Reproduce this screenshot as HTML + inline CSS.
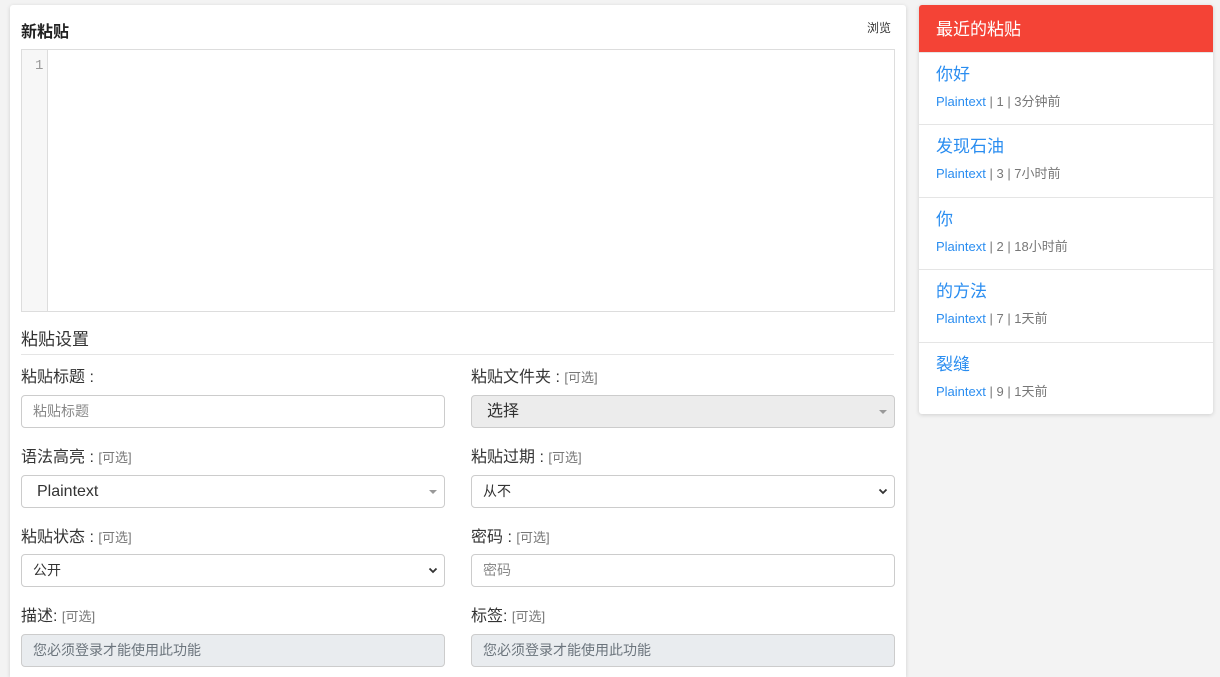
<!DOCTYPE html>
<html><head><meta charset="utf-8"><style>
*{box-sizing:border-box;margin:0;padding:0}
html,body{width:1220px;height:677px;overflow:hidden}
body{background:#f3f3f3;font-family:"Liberation Sans","Noto Sans CJK SC",sans-serif;color:#333;position:relative}
.abs{position:absolute}
.card{position:absolute;background:#fff;border-radius:3px;box-shadow:0 1px 4px rgba(0,0,0,.15)}
.lbl{position:absolute;font-size:16px;color:#333}
.lbl small{font-size:13px;color:#777}
.inp{position:absolute;height:33px;border:1px solid #ccc;border-radius:4px;background:#fff;font-size:14px;padding:0 11px;line-height:31px;color:#555}
.ph{color:#888}
.dis{background:#e9ecef;color:#6c757d}
.car{position:absolute;right:7px;top:14px;width:0;height:0;border-left:4px solid transparent;border-right:4px solid transparent;border-top:4px solid #999}
.chev{position:absolute;right:6px;top:10px}
.item{position:absolute;left:0;width:294px;border-top:1px solid #e5e5e5;padding:12px 17px}
.item .t{font-size:17px;color:#2a8df0;line-height:20px}
.item .m{font-size:13px;color:#777;margin-top:6px}
.item .m b{font-weight:normal;color:#2a8df0}
</style></head><body>
<div class="card" style="left:10px;top:5px;width:896px;height:672px;border-radius:3px 3px 0 0"></div>
<div class="abs" style="left:21px;top:18px;font-size:16px;font-weight:bold;color:#222">新粘贴</div>
<div class="abs" style="left:867px;top:19px;font-size:12px;color:#333">浏览</div>
<div class="abs" style="left:21px;top:49px;width:874px;height:263px;border:1px solid #ddd;background:#fff"></div>
<div class="abs" style="left:22px;top:50px;width:26px;height:261px;background:#f7f7f7;border-right:1px solid #ddd"></div>
<div class="abs" style="left:35px;top:58px;font-family:'Liberation Mono',monospace;font-size:14px;color:#999">1</div>
<div class="abs" style="left:21px;top:325px;font-size:17px;color:#333">粘贴设置</div>
<div class="abs" style="left:21px;top:354px;width:873px;height:1px;background:#e5e5e5"></div>

<div class="lbl" style="left:21px;top:363px">粘贴标题 :</div>
<div class="lbl" style="left:471px;top:363px">粘贴文件夹 : <small>[可选]</small></div>
<div class="inp ph" style="left:21px;top:395px;width:424px">粘贴标题</div>
<div class="inp" style="left:471px;top:395px;width:424px;background:#ececec;color:#333;font-size:16px;padding-left:15px">选择<span class="car"></span></div>

<div class="lbl" style="left:21px;top:443px">语法高亮 : <small>[可选]</small></div>
<div class="lbl" style="left:471px;top:443px">粘贴过期 : <small>[可选]</small></div>
<div class="inp" style="left:21px;top:475px;width:424px;color:#333;font-size:16px;padding-left:15px">Plaintext<span class="car"></span></div>
<div class="inp" style="left:471px;top:475px;width:424px;color:#333">从不<svg class="chev" width="10" height="10" viewBox="0 0 10 10"><path d="M1.5 3.5L5 7l3.5-3.5" stroke="#333" stroke-width="1.8" fill="none"/></svg></div>

<div class="lbl" style="left:21px;top:523px">粘贴状态 : <small>[可选]</small></div>
<div class="lbl" style="left:471px;top:523px">密码 : <small>[可选]</small></div>
<div class="inp" style="left:21px;top:554px;width:424px;color:#333">公开<svg class="chev" width="10" height="10" viewBox="0 0 10 10"><path d="M1.5 3.5L5 7l3.5-3.5" stroke="#333" stroke-width="1.8" fill="none"/></svg></div>
<div class="inp ph" style="left:471px;top:554px;width:424px">密码</div>

<div class="lbl" style="left:21px;top:602px">描述: <small>[可选]</small></div>
<div class="lbl" style="left:471px;top:602px">标签: <small>[可选]</small></div>
<div class="inp dis" style="left:21px;top:634px;width:424px">您必须登录才能使用此功能</div>
<div class="inp dis" style="left:471px;top:634px;width:424px">您必须登录才能使用此功能</div>

<div class="card" style="left:919px;top:5px;width:294px;height:409px;overflow:hidden">
<div style="height:47px;background:#f44336;color:#fff;font-size:17px;padding:10px 17px 0">最近的粘贴</div>
<div class="item" style="top:47px"><div class="t">你好</div><div class="m"><b>Plaintext</b> | 1 | 3分钟前</div></div>
<div class="item" style="top:119px"><div class="t">发现石油</div><div class="m"><b>Plaintext</b> | 3 | 7小时前</div></div>
<div class="item" style="top:192px"><div class="t">你</div><div class="m"><b>Plaintext</b> | 2 | 18小时前</div></div>
<div class="item" style="top:264px"><div class="t">的方法</div><div class="m"><b>Plaintext</b> | 7 | 1天前</div></div>
<div class="item" style="top:337px"><div class="t">裂缝</div><div class="m"><b>Plaintext</b> | 9 | 1天前</div></div>
</div>
</body></html>
